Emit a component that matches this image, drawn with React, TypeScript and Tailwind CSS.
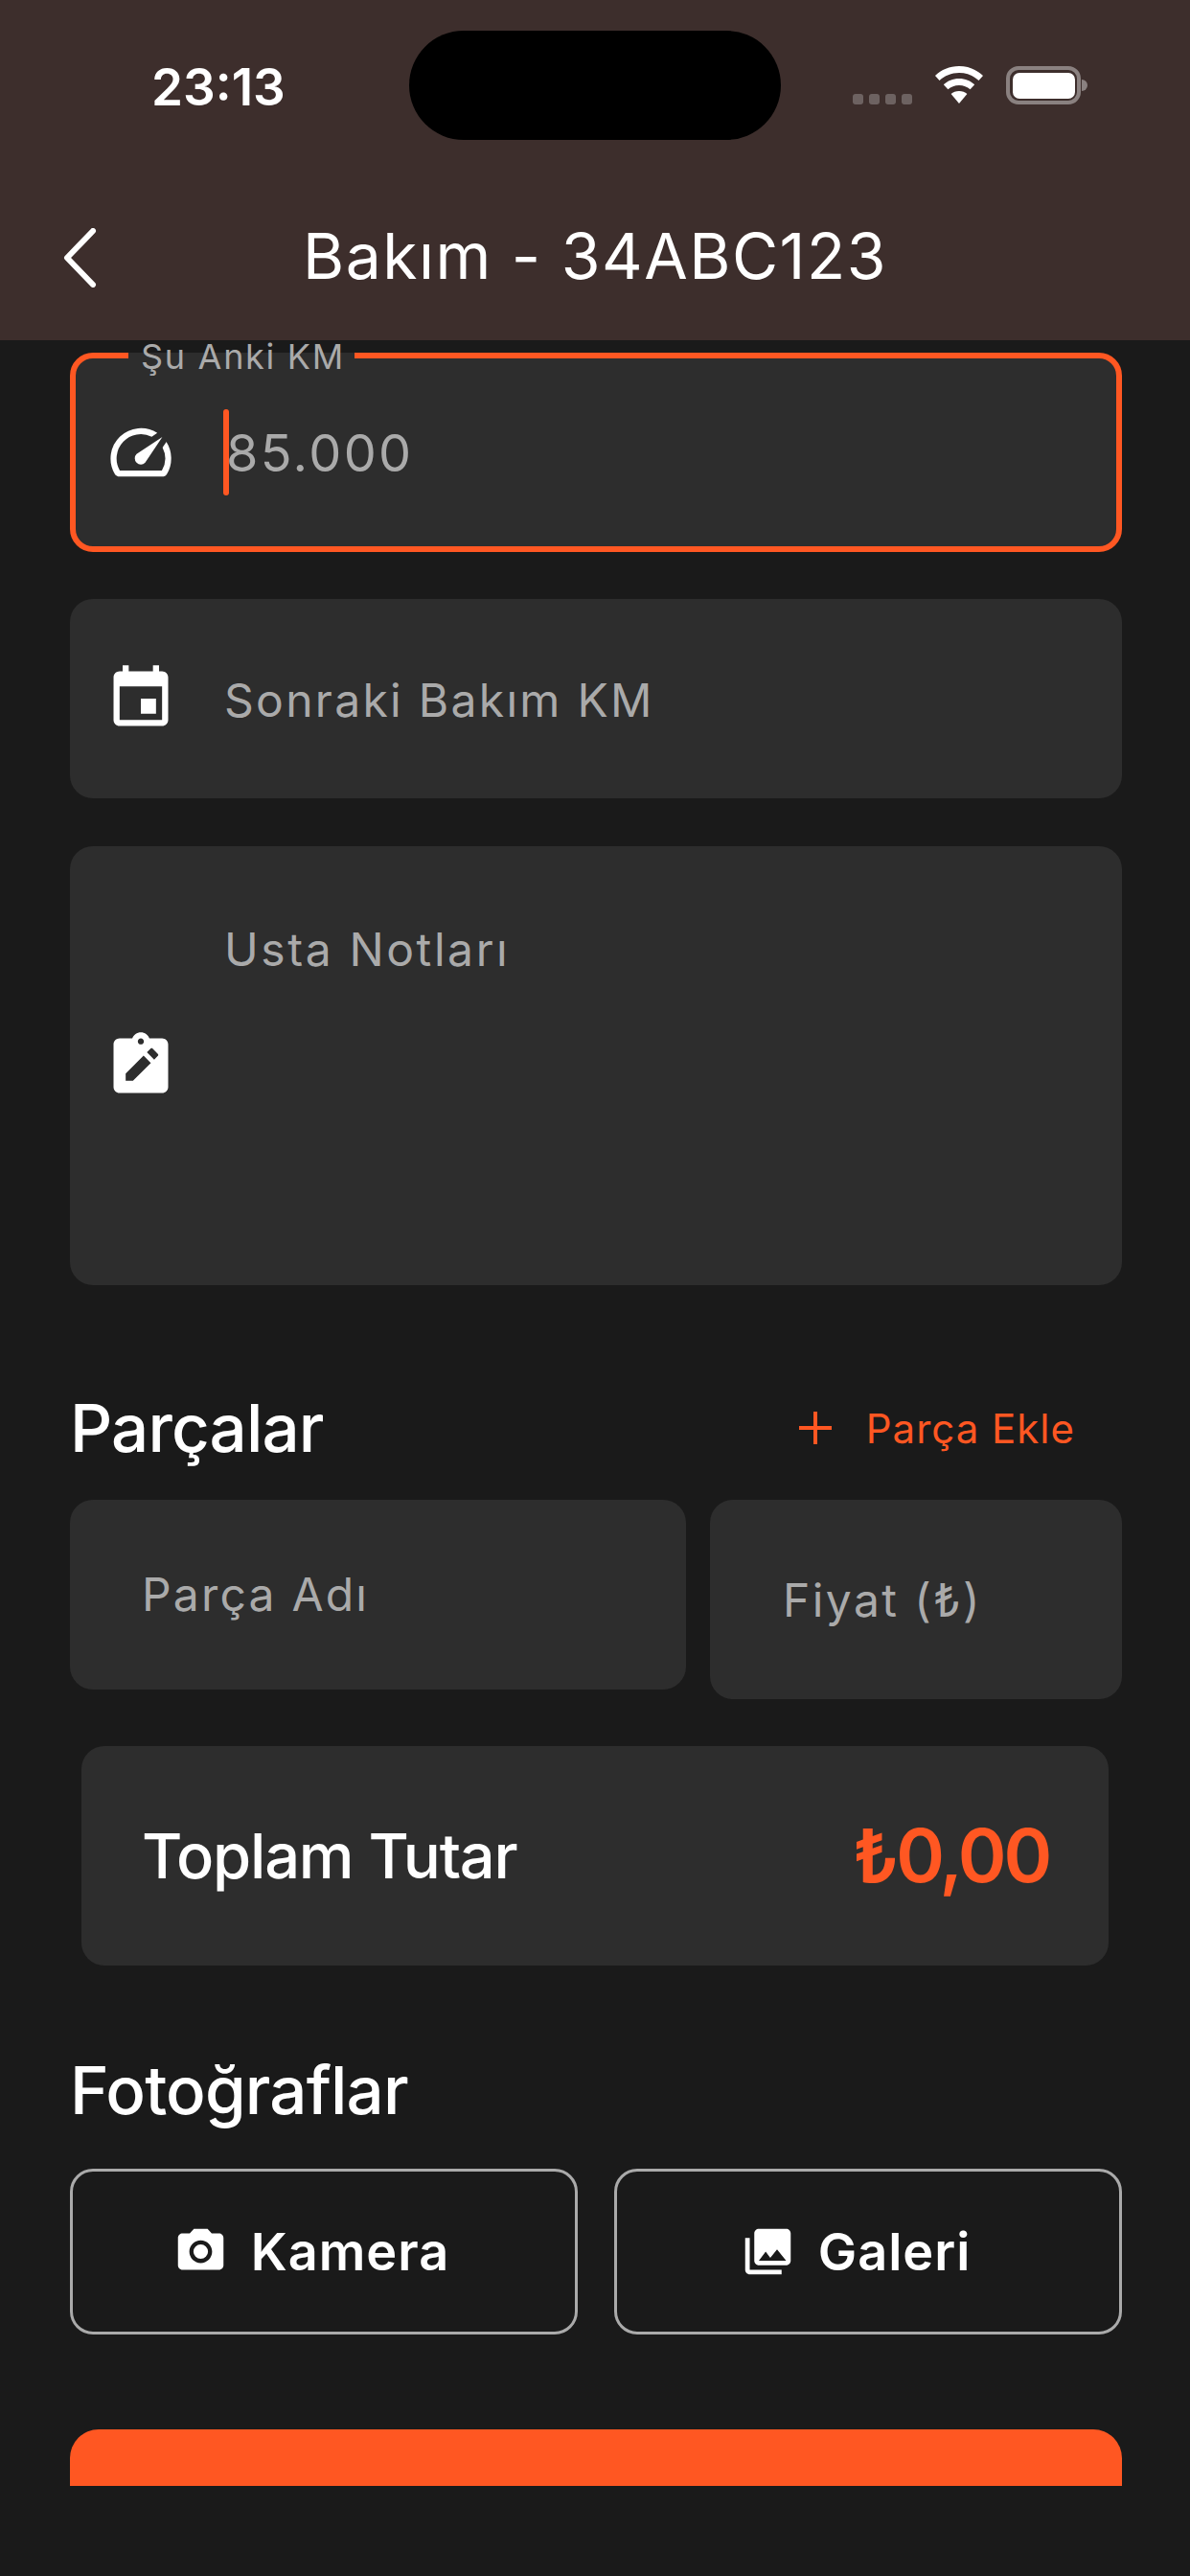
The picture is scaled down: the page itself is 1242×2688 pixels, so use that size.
function InputIcon({ path }: { path: string }) {
  return (
    <svg viewBox="0 0 24 24" className="w-[76px] h-[76px] shrink-0 fill-white">
      <path fillRule="evenodd" d={path} />
    </svg>
  );
}

export default function App() {
  return (
    <div className="w-[1242px] h-[2688px] flex flex-col overflow-hidden bg-[#1a1a1a] font-['Inter',sans-serif]">
      {/* Header */}
      <header className="h-[355px] shrink-0 bg-[#3d2e2c] flex flex-col">
        <div className="h-[178px] relative flex items-start justify-between pl-[158px] pr-[107px] pt-[59px]">
          <span className="text-[53px] leading-[64px] font-semibold text-white">23:13</span>
          <div className="absolute left-[427px] top-[32px] w-[388px] h-[114px] rounded-[57px] bg-black" />
          <div className="flex items-end gap-[23px] mt-[10px]">
            <div className="flex gap-[6px]">
              <span className="w-[11px] h-[11px] rounded-[3px] bg-white/25" />
              <span className="w-[11px] h-[11px] rounded-[3px] bg-white/25" />
              <span className="w-[11px] h-[11px] rounded-[3px] bg-white/25" />
              <span className="w-[11px] h-[11px] rounded-[3px] bg-white/25" />
            </div>
            <svg viewBox="0 0 52 40" className="w-[52px] h-[40px] fill-white">
              <path d="M26 0C16 0 7.500 3.800 1 10l4.500 5C10.800 10 18 7 26 7s15.200 3 20.500 8l4.500-5C44.500 3.800 36 0 26 0z" />
              <path d="M26 13c-6.500 0-12 2.400-16.200 6.300l4.600 5C17.400 21.600 21.500 20 26 20s8.600 1.600 11.600 4.300l4.600-5C38 15.400 32.500 13 26 13z" />
              <path d="M26 26c-3.300 0-6.200 1.200-8.400 3.100L26 39l8.400-9.900C32.200 27.200 29.300 26 26 26z" />
            </svg>
            <div className="flex items-center">
              <div className="w-[78px] h-[40px] rounded-[13px] border-[4px] border-white/40 p-[2.5px]">
                <div className="w-full h-full rounded-[7px] bg-white" />
              </div>
              <div className="w-[6px] h-[12px] ml-[1px] rounded-r-full bg-white/40" />
            </div>
          </div>
        </div>
        <div className="h-[177px] relative flex items-center justify-center">
          <svg viewBox="0 0 36 62" className="absolute left-[65px] top-[60px] w-[36px] h-[62px] fill-none stroke-white stroke-[6] [stroke-linecap:round] [stroke-linejoin:round]">
            <path d="M32 3 5 31l27 28" />
          </svg>
          <h1 className="text-[66px] leading-[80px] font-normal tracking-[1.5px] text-white">Bakım - 34ABC123</h1>
        </div>
      </header>

      {/* Form, the save button is cut off where the scroll area ends */}
      <main className="h-[2239px] shrink-0 pl-[73px] pr-[71px] flex flex-col">
        <div className="relative mt-[13px] h-[208px] shrink-0 rounded-[24px] border-[6px] border-[#ff5722] bg-[#2d2d2d] flex items-center pl-[30px]">
          <div className="absolute left-[55px] -top-[6px] w-[236px] h-[6px] bg-[#2d2d2d]" />
          <span className="absolute left-[68px] -top-[17px] text-[36px] leading-[30px] tracking-[1.7px] text-[#aaaaaa]">Şu Anki KM</span>
          <InputIcon path="M20.38 8.57l-1.23 1.85a8 8 0 0 1-.22 7.58H5.07A8 8 0 0 1 15.58 6.85l1.85-1.23A10 10 0 0 0 3.35 19a2 2 0 0 0 1.72 1h13.85a2 2 0 0 0 1.74-1 10 10 0 0 0-.27-10.44zM10.59 15.41a2 2 0 0 0 2.83 0l5.66-8.49-8.49 5.66a2 2 0 0 0 0 2.83z" />
          <div className="ml-[48px] w-[6px] h-[90px] bg-[#ff5722] rounded-full" />
          <span className="-ml-[3px] text-[54px] tracking-[2.4px] text-[#aaaaaa]">85.000</span>
        </div>

        <div className="mt-[49px] h-[208px] shrink-0 rounded-[24px] bg-[#2d2d2d] flex items-center pl-[36px]">
          <InputIcon path="M17 12h-5v5h5v-5zM16 1v2H8V1H6v2H5c-1.11 0-1.99.9-1.99 2L3 19c0 1.1.89 2 2 2h14c1.1 0 2-.9 2-2V5c0-1.1-.9-2-2-2h-1V1h-2zm3 18H5V8h14v11z" />
          <span className="ml-[49px] pt-[3px] text-[48px] tracking-[2.3px] text-[#aaaaaa]">Sonraki Bakım KM</span>
        </div>

        <div className="relative mt-[50px] h-[458px] shrink-0 rounded-[24px] bg-[#2d2d2d] flex items-center pl-[36px]">
          <InputIcon path="M19 3h-4.18C14.4 1.84 13.3 1 12 1s-2.4.84-2.82 2H5c-1.1 0-2 .9-2 2v14c0 1.1.9 2 2 2h14c1.1 0 2-.9 2-2V5c0-1.1-.9-2-2-2zM12 3c.55 0 1 .45 1 1s-.45 1-1 1-1-.45-1-1 .45-1 1-1zM7 17v-2.4l5.9-5.9 2.4 2.4-5.9 5.9H7zM14 7.6l1.2-1.2c.2-.2.5-.2.7 0l1.7 1.7c.2.2.2.5 0 .7L16.4 10 14 7.6z" />
          <span className="absolute left-[161px] top-[79px] text-[48px] leading-[58px] tracking-[2.6px] text-[#aaaaaa]">Usta Notları</span>
        </div>

        <div className="mt-[109px] flex items-center justify-between pr-[49px]">
          <h2 className="text-[69px] leading-[80px] font-medium tracking-[-0.85px] text-white">Parçalar</h2>
          <div className="flex items-center gap-[36px] text-[#ff5722]">
            <svg viewBox="0 0 34 34" className="w-[34px] h-[34px] stroke-[#ff5722] stroke-[4] fill-none">
              <path d="M17 0v34M0 17h34" />
            </svg>
            <span className="text-[42px] tracking-[1px]">Parça Ekle</span>
          </div>
        </div>

        <div className="mt-[35px] flex items-start gap-[25px]">
          <div className="w-[643px] h-[198px] rounded-[24px] bg-[#2d2d2d] flex items-center pl-[75px]">
            <span className="text-[48px] tracking-[2.2px] text-[#aaaaaa]">Parça Adı</span>
          </div>
          <div className="flex-1 h-[208px] rounded-[24px] bg-[#2d2d2d] flex items-center pl-[76px]">
            <span className="pt-[2px] text-[48px] tracking-[2.4px] text-[#aaaaaa]">Fiyat (₺)</span>
          </div>
        </div>

        <div className="mt-[49px] ml-[12px] mr-[14px] h-[229px] shrink-0 rounded-[24px] bg-[#2d2d2d] flex items-center justify-between pl-[63px] pr-[62px]">
          <span className="text-[65px] font-medium tracking-[-1.25px] text-white">Toplam Tutar</span>
          <span className="text-[77px] font-semibold tracking-[-3.2px] text-[#ff5722]">₺0,00</span>
        </div>

        <h2 className="mt-[90px] text-[69px] leading-[80px] font-medium tracking-[-0.85px] text-white">Fotoğraflar</h2>

        <div className="mt-[42px] flex gap-[38px]">
          <button className="flex-1 h-[173px] rounded-[24px] border-[3px] border-[#aaaaaa] flex items-center justify-center gap-[24px] pr-[26px] text-white">
            <svg viewBox="0 0 24 24" className="w-[57px] h-[57px] fill-white">
              <path d="M12 15.2a3.2 3.2 0 1 0 0-6.4 3.2 3.2 0 0 0 0 6.4z" />
              <path d="M9 2 7.17 4H4c-1.1 0-2 .9-2 2v12c0 1.1.9 2 2 2h16c1.1 0 2-.9 2-2V6c0-1.1-.9-2-2-2h-3.17L15 2H9zm3 15c-2.76 0-5-2.24-5-5s2.24-5 5-5 5 2.24 5 5-2.24 5-5 5z" />
            </svg>
            <span className="text-[54px] tracking-[1px] font-semibold">Kamera</span>
          </button>
          <button className="flex-1 h-[173px] rounded-[24px] border-[3px] border-[#aaaaaa] flex items-center justify-center gap-[24px] pr-[26px] text-white">
            <svg viewBox="0 0 24 24" className="w-[57px] h-[57px] fill-white">
              <path d="M22 16V4c0-1.1-.9-2-2-2H8c-1.1 0-2 .9-2 2v12c0 1.1.9 2 2 2h12c1.1 0 2-.9 2-2zm-11-4 2.03 2.71L16 11l4 5H8l3-4zM2 6v14c0 1.1.9 2 2 2h14v-2H4V6H2z" />
            </svg>
            <span className="text-[54px] tracking-[1px] font-semibold">Galeri</span>
          </button>
        </div>

        <div className="mt-[99px] h-[59px] shrink-0 overflow-hidden">
          <div className="h-[168px] rounded-[30px] bg-[#ff5722]" />
        </div>
      </main>
    </div>
  );
}
